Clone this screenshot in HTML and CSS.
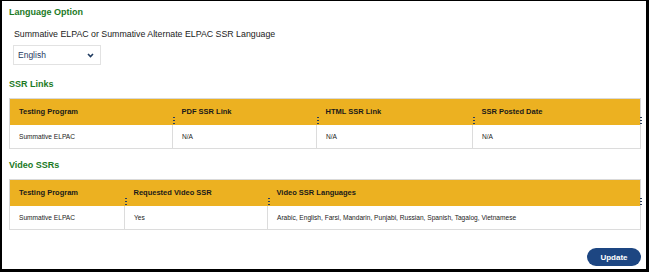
FILE: index.html
```html
<!DOCTYPE html>
<html lang="en">
<head>
    <meta charset="UTF-8">
    <meta name="viewport" content="width=device-width, initial-scale=1.0">
    <title>SSR Options</title>
    <link rel="stylesheet" href="styles.css">
</head>
<body>
    <div class="frame">
        <h2 class="section-title">Language Option</h2>
        <div class="lang-label">Summative ELPAC or Summative Alternate ELPAC SSR Language</div>
        <div class="select-box">
            <span>English</span>
            <svg width="7" height="5" viewBox="0 0 7 5"><path d="M1 1 L3.5 3.5 L6 1" fill="none" stroke="#1f3a5f" stroke-width="1.6"/></svg>
        </div>

        <h2 class="section-title">SSR Links</h2>
        <table class="grid links">
            <thead>
                <tr>
                    <th>Testing Program<span class="grip"></span></th>
                    <th>PDF SSR Link<span class="grip"></span></th>
                    <th>HTML SSR Link<span class="grip"></span></th>
                    <th>SSR Posted Date<span class="grip"></span></th>
                </tr>
            </thead>
            <tbody>
                <tr>
                    <td>Summative ELPAC</td>
                    <td>N/A</td>
                    <td>N/A</td>
                    <td>N/A</td>
                </tr>
            </tbody>
        </table>

        <h2 class="section-title">Video SSRs</h2>
        <table class="grid videos">
            <thead>
                <tr>
                    <th>Testing Program<span class="grip"></span></th>
                    <th>Requested Video SSR<span class="grip"></span></th>
                    <th>Video SSR Languages<span class="grip"></span></th>
                </tr>
            </thead>
            <tbody>
                <tr>
                    <td>Summative ELPAC</td>
                    <td>Yes</td>
                    <td>Arabic, English, Farsi, Mandarin, Punjabi, Russian, Spanish, Tagalog, Vietnamese</td>
                </tr>
            </tbody>
        </table>

        <div class="actions">
            <button class="update-btn">Update</button>
        </div>
    </div>
</body>
</html>
```

FILE: styles.css
```css
body {
    margin: 0;
    font-family: "Liberation Sans", Arial, sans-serif;
    background: #000;
}
.frame {
    box-sizing: border-box;
    width: 649px;
    height: 272px;
    background: #fff;
    border-style: solid;
    border-color: #000;
    border-width: 1px 3px 3px 2px;
    padding: 4px 5px 0 7px;
}
.section-title {
    color: #1b7a1f;
    font-size: 9px;
    font-weight: bold;
    margin: 0;
    line-height: 14px;
}
.lang-label {
    font-size: 8.8px;
    color: #222;
    margin: 9px 0 0 5px;
    line-height: 13px;
}
.select-box {
    box-sizing: border-box;
    width: 88px;
    height: 20px;
    margin: 4px 0 12px 4px;
    border: 1px solid #e2e2e2;
    display: flex;
    align-items: center;
    justify-content: space-between;
    padding: 0 6px 0 4px;
    font-size: 8.5px;
    color: #1f3a5f;
}
.grid {
    width: 632px;
    border-collapse: collapse;
    margin: 7px 0 9px 0;
    table-layout: fixed;
}
.grid th {
    position: relative;
    background: #ecb121;
    height: 26px;
    box-sizing: border-box;
    text-align: left;
    font-size: 7.5px;
    color: #1a1a1a;
    padding: 0 9px;
    border-top: 1px solid #d9d9d9;
}
.grid td {
    height: 24px;
    box-sizing: border-box;
    font-size: 6.6px;
    color: #222;
    padding: 0 9px;
    border: 1px solid #dcdcdc;
    border-top: none;
}
.grid th:first-child {
    border-left: 1px solid #d9d9d9;
}
.grid th:last-child {
    border-right: 1px solid #d9d9d9;
}
.grip {
    position: absolute;
    z-index: 1;
    right: -2px;
    bottom: 0;
    width: 2px;
    height: 9px;
    background: radial-gradient(circle, #2b3f5c 0.9px, transparent 1px) 0 0 / 2px 3px repeat-y;
}
.links th:nth-child(1) { width: 163px; }
.links th:nth-child(2) { width: 144px; }
.links th:nth-child(3) { width: 156px; }
.videos th:nth-child(1) { width: 115px; }
.videos th:nth-child(2) { width: 143px; }
.actions {
    display: flex;
    justify-content: flex-end;
    margin-top: 18px;
}
.update-btn {
    background: #1d4682;
    color: #fff;
    border: none;
    border-radius: 9px;
    height: 18px;
    width: 54px;
    font-family: "Liberation Sans", Arial, sans-serif;
    font-size: 8px;
    font-weight: bold;
    padding: 0;
}
```
